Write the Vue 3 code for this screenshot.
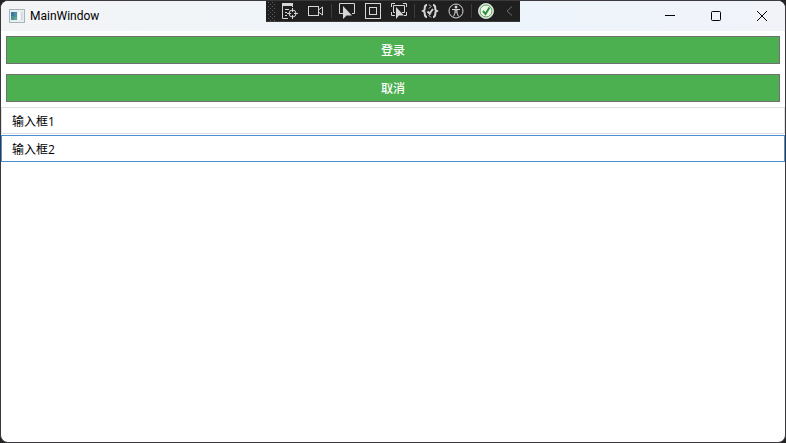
<template>
  <div class="desktop">
    <main class="window">
      <header class="title-bar">
        <svg class="app-icon" width="16" height="14" viewBox="0 0 16 14" aria-hidden="true">
          <rect x="0.5" y="0.5" width="15" height="13" fill="#e9eef0" stroke="#a9b4ba" />
          <rect x="2" y="3" width="6" height="8" fill="#4f8f9f" />
          <path d="M2 3h3v4H2z" fill="#3f75a5" />
          <path d="M5 8h3v3H5z" fill="#62a98c" />
          <rect x="9" y="3" width="2" height="8" fill="#fff" />
          <rect x="12" y="3" width="2" height="8" fill="#cfdfe4" />
        </svg>
        <h1 class="title">MainWindow</h1>
        <div class="window-controls">
          <button type="button" aria-label="Minimize">
            <svg width="12" height="12" viewBox="0 0 12 12"><path d="M1 5.5h10" /></svg>
          </button>
          <button type="button" aria-label="Maximize">
            <svg width="12" height="12" viewBox="0 0 12 12"><rect x="1.5" y="1.5" width="9" height="9" rx="1" /></svg>
          </button>
          <button type="button" aria-label="Close">
            <svg width="12" height="12" viewBox="0 0 12 12"><path d="M1 1l10 10M11 1L1 11" /></svg>
          </button>
        </div>
      </header>

      <div class="debug-layer">
        <div class="debug-bar" role="toolbar">
          <svg class="grip" width="11" height="20" viewBox="0 0 11 20" aria-hidden="true">
            <g v-for="row in 5" :key="row" fill="#5e5e5e">
              <rect x="2" :y="row * 4 - 3" width="1" height="1" />
              <rect x="6" :y="row * 4 - 3" width="1" height="1" />
              <rect x="4" :y="row * 4 - 1" width="1" height="1" />
              <rect x="8" :y="row * 4 - 1" width="1" height="1" />
            </g>
          </svg>
          <button type="button" aria-label="Go to Live Visual Tree">
            <svg width="18" height="18" viewBox="0 0 18 18">
              <path d="M1 2.5h11" stroke-width="3" />
              <path d="M1.5 2v14.5H7M11.5 2v3M4 7.5h4M4 10.5h2M4 13.5h2" />
              <circle cx="11.5" cy="11.5" r="3.5" />
              <path d="M11.5 6v4M11.5 13v4M6 11.5h4M13 11.5h4" />
            </svg>
          </button>
          <button type="button" aria-label="Record">
            <svg width="18" height="18" viewBox="0 0 18 18">
              <rect x="1.5" y="4.5" width="10" height="9" />
              <path d="M11.5 8l4-3v8l-4-3" />
            </svg>
          </button>
          <span class="separator"></span>
          <button type="button" aria-label="Select Element">
            <svg width="18" height="18" viewBox="0 0 18 18">
              <path d="M5 11.5H1.5v-10h15v10H14" />
              <path class="solid" d="M5 4v13l3.5-3.5H14z" />
            </svg>
          </button>
          <button type="button" aria-label="Display Layout Adorners">
            <svg width="18" height="18" viewBox="0 0 18 18">
              <rect x="1.5" y="1.5" width="15" height="15" />
              <rect x="5.5" y="5.5" width="7" height="7" />
            </svg>
          </button>
          <button type="button" aria-label="Track Focused Element">
            <svg width="18" height="18" viewBox="0 0 18 18">
              <path d="M1.5 5V1.5H5M13 1.5h3.5V5M16.5 10v3.5H14M1.5 10v3.5H5" />
              <path d="M5 10.5H3.5v-7h11v7H12" />
              <path class="solid" d="M6 5v12l3-3.5h5z" />
            </svg>
          </button>
          <span class="separator"></span>
          <button type="button" aria-label="Binding Failures">
            <svg width="18" height="18" viewBox="0 0 18 18">
              <path d="M6 3C3 3 4 6 3.5 8L2 9l1.5 1c.5 2-.5 5 2.500 5M12 3c3 0 2 3 2.500 5L16 9l-1.500 1c-.5 2 .5 5-2.500 5" stroke-width="2" />
              <path d="M8 2.5l2 2-2 2M10 11.5l-2 2 2 2" />
              <path d="M6.5 9.5l2 2L12 7" stroke-width="2" />
            </svg>
          </button>
          <button type="button" aria-label="Scan for Accessibility Issues">
            <svg width="18" height="18" viewBox="0 0 18 18">
              <circle cx="9" cy="9" r="7" />
              <circle class="solid" cx="9" cy="5" r="1.5" />
              <path d="M5 7.5h8M9 7v4M8 8v3l-1.5 3.5M10 8v3l1.5 3.5" />
            </svg>
          </button>
          <span class="separator"></span>
          <button type="button" class="status" aria-label="Hot Reload">
            <svg width="18" height="18" viewBox="0 0 18 18">
              <circle cx="9" cy="9" r="7.5" fill="#edf7ea" />
              <circle cx="9" cy="9" r="6" class="ring" />
              <path class="tick" d="M6 9l2.5 3 4-6.5" />
            </svg>
          </button>
          <button type="button" class="collapse" aria-label="Collapse toolbar">
            <svg width="18" height="18" viewBox="0 0 18 18"><path class="chevron" d="M12 4.5L7 9l5 4.5" /></svg>
          </button>
        </div>
      </div>

      <form class="content" @submit.prevent>
        <button v-for="action in actions" :key="action" type="button" class="action">{{ action }}</button>
        <div class="fields">
          <input
            v-for="(field, index) in fields"
            :key="index"
            v-model="fields[index]"
            type="text"
            class="field"
            :class="{ active: index === activeField }"
            :aria-label="`输入框${index + 1}`"
            @focus="activeField = index"
          />
        </div>
      </form>
    </main>
  </div>
</template>

<script setup>
import { ref } from 'vue';

const actions = ['登录', '取消'];
const fields = ref(['输入框1', '输入框2']);
const activeField = ref(1);
</script>

<style>
body {
  margin: 0;
}
</style>

<style scoped>
.desktop {
  min-height: 100vh;
  display: flex;
  background: #222;
  font-family: "Open Sans", "Noto Sans CJK SC", sans-serif;
  font-size: 12px;
  color: #000;
}

.window {
  position: relative;
  flex: 1;
  box-sizing: border-box;
  border: 1px solid #3b393d;
  border-radius: 8px;
  background: #fff;
  overflow: hidden;
}

.title-bar {
  display: flex;
  align-items: center;
  height: 30px;
  padding-left: 8px;
  background: linear-gradient(90deg, #f3f4f6 0%, #f0f5f9 35%, #edf4fb 65%, #f1f3f9 100%);
}

.title {
  margin: 0 0 0 5px;
  font-family: Roboto, sans-serif;
  font-size: 12px;
  font-weight: 400;
  line-height: 16px;
}

.window-controls {
  display: flex;
  align-self: stretch;
  margin-left: auto;
}

.window-controls button {
  display: flex;
  align-items: center;
  justify-content: center;
  width: 46px;
  padding: 0;
  border: none;
  background: transparent;
}

.window-controls svg {
  fill: none;
  stroke: #000;
}

.debug-layer {
  position: absolute;
  top: 0;
  left: 0;
  right: 0;
  display: flex;
  justify-content: center;
  pointer-events: none;
}

.debug-bar {
  display: flex;
  align-items: center;
  height: 20px;
  border-bottom: 1px solid #3a3a3a;
  background: #1f1f1f;
  pointer-events: auto;
}

.debug-bar button {
  display: flex;
  align-items: center;
  justify-content: center;
  width: 26px;
  height: 20px;
  padding: 0;
  border: none;
  background: transparent;
}

.debug-bar button svg {
  fill: none;
  stroke: #d6d6d6;
}

.debug-bar .solid {
  fill: #d6d6d6;
  stroke: none;
}

.debug-bar .ring {
  stroke: #4da453;
}

.debug-bar .tick {
  stroke: #2f9140;
  stroke-width: 2;
}

.debug-bar .chevron {
  stroke: #707070;
}

.debug-bar .status {
  width: 24px;
}

.debug-bar .collapse {
  width: 22px;
}

.separator {
  width: 1px;
  height: 14px;
  margin: 0 2px;
  background: #3d3d3d;
}

.content {
  display: flex;
  flex-direction: column;
}

.action {
  height: 28px;
  margin: 5px;
  padding: 0;
  border: 1px solid #707070;
  background: #4caf50;
  color: #fff;
  font-family: inherit;
  font-size: 12px;
  font-weight: 500;
}

.fields {
  display: flex;
  flex-direction: column;
  gap: 1px;
}

.field {
  height: 27px;
  box-sizing: border-box;
  padding: 0 10px;
  border: 1px solid #e0dfe2;
  outline: none;
  background: #fff;
  color: #000;
  font-family: inherit;
  font-size: 12px;
}

.field.active {
  border-color: #4a90d2;
}
</style>
